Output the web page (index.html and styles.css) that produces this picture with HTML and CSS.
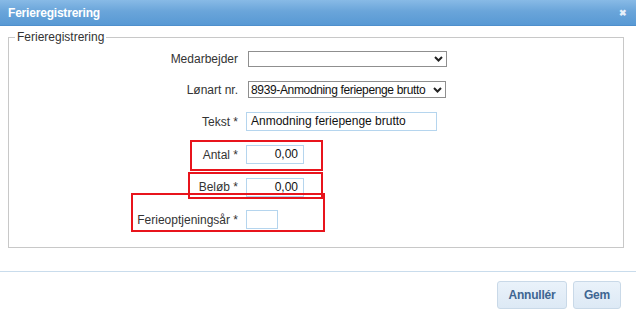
FILE: index.html
```html
<!DOCTYPE html>
<html lang="da">
<head>
<meta charset="utf-8">
<title>Ferieregistrering</title>
<link rel="stylesheet" href="styles.css">
</head>
<body>
<div class="dialog">
  <div class="titlebar">
    <span class="title">Ferieregistrering</span>
    <span class="close">&#x2716;</span>
  </div>
  <div class="content">
    <fieldset class="box">
      <legend>Ferieregistrering</legend>
      <div class="form">
        <label class="lbl">Medarbejder</label>
        <div class="field">
          <div class="select wide">
            <span class="redact"></span>
            <svg class="chev" width="9" height="6" viewBox="0 0 9 6"><path d="M1 1l3.5 3.5L8 1" fill="none" stroke="#222" stroke-width="2"/></svg>
          </div>
        </div>

        <label class="lbl">Lønart nr.</label>
        <div class="field">
          <div class="select wide2">
            <span class="val">8939-Anmodning feriepenge brutto</span>
            <svg class="chev" width="9" height="6" viewBox="0 0 9 6"><path d="M1 1l3.5 3.5L8 1" fill="none" stroke="#222" stroke-width="2"/></svg>
          </div>
        </div>

        <label class="lbl">Tekst *</label>
        <div class="field"><div class="input text">Anmodning feriepenge brutto</div></div>

        <label class="lbl">Antal *</label>
        <div class="field"><div class="input num">0,00</div></div>

        <label class="lbl">Beløb *</label>
        <div class="field"><div class="input num">0,00</div></div>

        <label class="lbl">Ferieoptjeningsår *</label>
        <div class="field"><div class="input year"></div></div>
      </div>
    </fieldset>
  </div>
  <div class="footer">
    <button class="btn cancel">Annullér</button>
    <button class="btn save">Gem</button>
  </div>

  <div class="mark m1"></div>
  <div class="mark m2"></div>
  <div class="mark m3"></div>
</div>
</body>
</html>
```

FILE: styles.css
```css
* { box-sizing: border-box; }
html, body { margin: 0; padding: 0; background: #fff; }
body {
  font-family: "Liberation Sans", Arial, sans-serif;
  font-size: 12px;
  color: #333;
}
.dialog {
  position: relative;
  width: 636px;
  height: 312px;
  background: #fff;
  overflow: hidden;
}
.titlebar {
  height: 26px;
  display: flex;
  align-items: center;
  justify-content: space-between;
  padding: 0 9px 0 8px;
  background: linear-gradient(#88bae6, #6aa5da 45%, #5899d4);
  border-bottom: 1px solid #4f8fcc;
}
.title {
  color: #fff;
  font-weight: bold;
  font-size: 12px;
  letter-spacing: -0.2px;
}
.close {
  color: #e6f0fa;
  font-size: 9px;
  font-weight: bold;
}
.content {
  padding: 4px 12px 0 8px;
}
.box {
  margin: 0;
  padding: 0;
  height: 218px;
  border: 1px solid #c8c8c8;
}
.box legend {
  margin-left: 6px;
  padding: 0 2px;
  font-size: 12px;
  line-height: 14px;
  color: #333;
}
.form {
  display: grid;
  grid-template-columns: 229px auto;
  grid-template-rows: 16px 17px 19px 19px 18px 19px;
  column-gap: 8px;
  row-gap: 14px;
  margin-top: 7px;
}
.lbl {
  display: flex;
  align-items: center;
  justify-content: flex-end;
  color: #333;
  font-size: 12px;
}
.field {
  display: flex;
  align-items: center;
}
.select {
  display: flex;
  align-items: center;
  justify-content: space-between;
  height: 17px;
  border: 1px solid #8f8f8f;
  background: #fff;
  color: #111;
  padding: 0 3px 0 2px;
  font-size: 12px;
  margin-left: 2px;
  white-space: nowrap;
}
.select.wide { width: 199px; height: 16px; }
.select.wide2 { width: 198px; }
.val { letter-spacing: -0.35px; }
.redact {
  display: block;
  width: 150px;
  height: 6px;
}
.chev { flex: none; margin-left: 2px; }
.input {
  height: 19px;
  border: 1px solid #b5d5ee;
  background: #fff;
  color: #111;
  font-size: 12px;
  line-height: 17px;
  padding: 0 4px;
  white-space: nowrap;
}
.input.text { width: 191px; }
.input.num { width: 58px; text-align: right; padding-right: 5px; }
.input.year { width: 32px; }
.footer {
  margin-top: 23px;
  border-top: 1px solid #c9dcec;
  display: flex;
  justify-content: flex-end;
  gap: 6px;
  padding: 9px 15px 0 0;
}
.btn {
  height: 28px;
  padding: 0;
  border: 1px solid #c9d9e8;
  border-radius: 3px;
  background: linear-gradient(#eaf2fa, #dde9f5);
  color: #3e6591;
  font-family: "Liberation Sans", Arial, sans-serif;
  font-weight: bold;
  font-size: 12px;
  letter-spacing: -0.2px;
}
.btn.cancel { width: 70px; }
.btn.save { width: 48px; }
.mark {
  position: absolute;
  border: 2px solid #e8141c;
}
.m1 { left: 190px; top: 140px; width: 133px; height: 31px; }
.m2 { left: 188px; top: 172px; width: 135px; height: 27px; }
.m3 { left: 131px; top: 193px; width: 194px; height: 39px; }
```
